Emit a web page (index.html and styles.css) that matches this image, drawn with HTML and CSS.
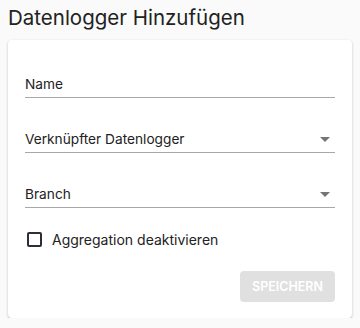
FILE: index.html
```html
<!DOCTYPE html>
<html lang="de">
<head>
    <meta charset="UTF-8" />
    <title>Datenlogger Hinzufügen</title>
    <link rel="stylesheet" href="styles.css">
</head>
<body>
    <h1 class="page-title">Datenlogger Hinzufügen</h1>

    <form class="card">
        <div class="field">
            <input type="text" class="field-input" placeholder="Name">
        </div>

        <div class="field field-select">
            <span class="field-value">Verknüpfter Datenlogger</span>
            <svg class="dropdown-icon" width="10" height="5" viewBox="0 0 10 5"><path d="M0 0l5 5 5-5z" fill="#757575"/></svg>
        </div>

        <div class="field field-select">
            <span class="field-value">Branch</span>
            <svg class="dropdown-icon" width="10" height="5" viewBox="0 0 10 5"><path d="M0 0l5 5 5-5z" fill="#757575"/></svg>
        </div>

        <label class="check-row">
            <span class="checkbox"></span>
            <span class="check-label">Aggregation deaktivieren</span>
        </label>

        <div class="actions">
            <button type="button" class="save-btn" disabled>Speichern</button>
        </div>
    </form>
</body>
</html>
```

FILE: styles.css
```css
body {
    font-family: Inter, "Noto Sans", sans-serif;
    background-color: #fafafa;
    color: #222;
    margin: 0;
    padding: 0 8px;
}
.page-title {
    font-size: 20.5px;
    font-weight: 400;
    line-height: 24px;
    margin: 6px 0 10px;
    color: #222;
}
.card {
    background: white;
    border-radius: 4px;
    box-shadow: 0 1px 3px rgba(0,0,0,0.2), 0 1px 1px rgba(0,0,0,0.1);
    padding: 31px 17px 16px;
}
.field {
    display: flex;
    align-items: center;
    height: 26px;
    padding: 0;
    border-bottom: 1px solid #a8a8a8;
    margin-bottom: 28px;
}
.field-input {
    border: none;
    outline: none;
    padding: 0;
    width: 100%;
    font-family: inherit;
    font-size: 13.7px;
    background: transparent;
}
.field-input::placeholder {
    color: #222;
    opacity: 1;
}
.field-select {
    justify-content: space-between;
}
.field-value {
    font-size: 13.7px;
}
.dropdown-icon {
    margin-right: 5px;
}
.check-row {
    display: flex;
    align-items: center;
    height: 24px;
    margin-top: -9px;
}
.checkbox {
    width: 11px;
    height: 11px;
    border: 2px solid #2b2f38;
    border-radius: 2px;
    margin-left: 2px;
    margin-right: 10px;
}
.check-label {
    font-size: 14px;
}
.actions {
    display: flex;
    justify-content: flex-end;
    margin-top: 20px;
}
.save-btn {
    background-color: #e0e0e0;
    color: white;
    border: none;
    border-radius: 4px;
    width: 95px;
    height: 31px;
    font-family: inherit;
    font-weight: 600;
    font-size: 12.5px;
    text-transform: uppercase;
}
```
